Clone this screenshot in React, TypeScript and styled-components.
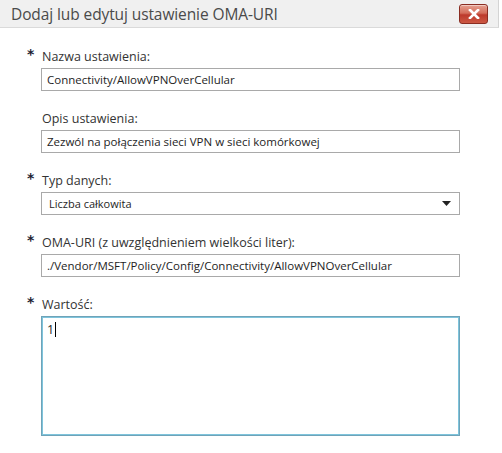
import React from "react";
import styled, { createGlobalStyle } from "styled-components";

const Global = createGlobalStyle`
  html, body { margin: 0; padding: 0; background: #ffffff; }
  body { font-family: "Open Sans", "Noto Sans", "Liberation Sans", sans-serif; color: #222; }
`;

const Dialog = styled.div`
  width: 502px;
  height: 453px;
  background: #fff;
  box-sizing: border-box;
  display: flex;
  flex-direction: column;
`;

const TitleBar = styled.div`
  height: 28px;
  width: 499px;
  box-sizing: border-box;
  background: #f0f0f0;
  border-bottom: 1px solid #dadada;
  border-right: 1px solid #d4d4d4;
  display: flex;
  align-items: center;
  justify-content: space-between;
  padding: 0 10px 0 11px;
`;

const Title = styled.div`
  font-family: "Open Sans", sans-serif;
  font-size: 15.5px;
  color: #4a4a4a;
  letter-spacing: -0.1px;
`;

const CloseButton = styled.button`
  width: 29px;
  height: 20px;
  padding: 0;
  border: 1px solid #8a2d22;
  border-radius: 3px;
  background: linear-gradient(#e6a191 0%, #d46e5b 45%, #bd3a2c 55%, #cc5843 100%);
  box-shadow: inset 0 1px 0 rgba(255, 255, 255, 0.45);
  display: flex;
  align-items: center;
  justify-content: center;
`;

const Form = styled.div`
  display: flex;
  flex-direction: column;
  gap: 18px;
  padding: 19px 0 0 27px;
`;

const Field = styled.div`
  display: flex;
  flex-direction: column;
  gap: 3px;
`;

const LabelRow = styled.div`
  display: flex;
  align-items: center;
  height: 18px;
`;

const Star = styled.span<{ $show: boolean }>`
  width: 15px;
  font-family: "DejaVu Sans", sans-serif;
  font-weight: bold;
  font-size: 14px;
  color: #1c2233;
  visibility: ${(p) => (p.$show ? "visible" : "hidden")};
  line-height: 1;
  position: relative;
  top: -2px;
`;

const Label = styled.span`
  font-size: 12.5px;
  color: #333;
`;

const Box = styled.div`
  margin-left: 14px;
  width: 419px;
  height: 23px;
  box-sizing: border-box;
  border: 1px solid #a9a9a9;
  display: flex;
  align-items: center;
  padding: 0 5px;
  font-size: 11.5px;
  color: #1e1e1e;
  white-space: nowrap;
  overflow: hidden;
`;

const SelectBox = styled(Box)`
  justify-content: space-between;
  font-size: 11px;
  padding: 0 8px 0 7px;
`;

const TextArea = styled.div`
  margin-left: 14px;
  width: 419px;
  height: 120px;
  box-sizing: border-box;
  border: 1px solid #6fa3b8;
  box-shadow: inset 0 0 0 1px #7ec4dc;
  padding: 4px 5px;
  font-size: 12.5px;
  color: #1e1e1e;
`;

const Caret = styled.span`
  display: inline-block;
  width: 1px;
  height: 15px;
  background: #000;
  vertical-align: -3px;
  margin-left: 1px;
`;

type FieldDef = { label: string; required: boolean; value: string; kind: "input" | "select" | "area" };

const fields: FieldDef[] = [
  { label: "Nazwa ustawienia:", required: true, value: "Connectivity/AllowVPNOverCellular", kind: "input" },
  { label: "Opis ustawienia:", required: false, value: "Zezwól na połączenia sieci VPN w sieci komórkowej", kind: "input" },
  { label: "Typ danych:", required: true, value: "Liczba całkowita", kind: "select" },
  {
    label: "OMA-URI (z uwzględnieniem wielkości liter):",
    required: true,
    value: "./Vendor/MSFT/Policy/Config/Connectivity/AllowVPNOverCellular",
    kind: "input",
  },
  { label: "Wartość:", required: true, value: "1", kind: "area" },
];

export default function App() {
  return (
    <>
      <Global />
      <Dialog>
        <TitleBar>
          <Title>Dodaj lub edytuj ustawienie OMA-URI</Title>
          <CloseButton aria-label="Zamknij">
            <svg width="12" height="10" viewBox="0 0 12 10">
              <path d="M2 1 L10 9 M10 1 L2 9" stroke="#fff" strokeWidth="2.6" strokeLinecap="square" />
            </svg>
          </CloseButton>
        </TitleBar>
        <Form>
          {fields.map((f) => (
            <Field key={f.label}>
              <LabelRow>
                <Star $show={f.required}>*</Star>
                <Label>{f.label}</Label>
              </LabelRow>
              {f.kind === "input" && <Box>{f.value}</Box>}
              {f.kind === "select" && (
                <SelectBox>
                  <span>{f.value}</span>
                  <svg width="9" height="5" viewBox="0 0 9 5">
                    <path d="M0 0 H9 L4.5 5 Z" fill="#222" />
                  </svg>
                </SelectBox>
              )}
              {f.kind === "area" && (
                <TextArea>
                  {f.value}
                  <Caret />
                </TextArea>
              )}
            </Field>
          ))}
        </Form>
      </Dialog>
    </>
  );
}
